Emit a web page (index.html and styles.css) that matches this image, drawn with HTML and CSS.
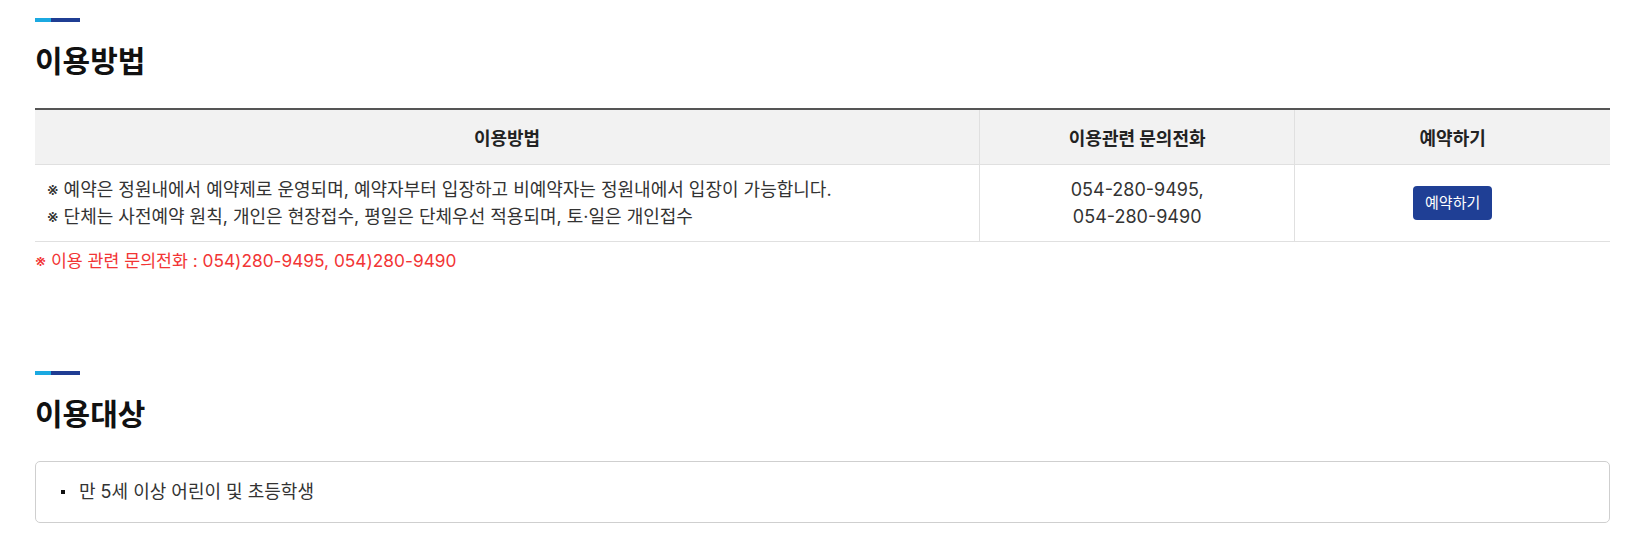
FILE: index.html
```html
<!DOCTYPE html>
<html lang="ko">
<head>
<meta charset="utf-8">
<title>이용방법</title>
<link rel="stylesheet" href="styles.css">
</head>
<body>
<div class="wrap">
  <section class="section">
    <div class="accent"><span class="accent-light"></span><span class="accent-dark"></span></div>
    <h2 class="title">이용방법</h2>
    <table class="info-table">
      <colgroup>
        <col class="col-main">
        <col class="col-side">
        <col class="col-side">
      </colgroup>
      <thead>
        <tr>
          <th>이용방법</th>
          <th>이용관련 문의전화</th>
          <th>예약하기</th>
        </tr>
      </thead>
      <tbody>
        <tr>
          <td class="cell-left">※ 예약은 정원내에서 예약제로 운영되며, 예약자부터 입장하고 비예약자는 정원내에서 입장이 가능합니다.<br>※ 단체는 사전예약 원칙, 개인은 현장접수, 평일은 단체우선 적용되며, 토·일은 개인접수</td>
          <td class="cell-phone">054-280-9495,<br>054-280-9490</td>
          <td class="cell-btn"><a class="btn" href="#">예약하기</a></td>
        </tr>
      </tbody>
    </table>
    <p class="notice">※ 이용 관련 문의전화 : 054)280-9495, 054)280-9490</p>
  </section>

  <section class="section section-second">
    <div class="accent"><span class="accent-light"></span><span class="accent-dark"></span></div>
    <h2 class="title">이용대상</h2>
    <div class="box">
      <ul class="dot-list">
        <li>만 5세 이상 어린이 및 초등학생</li>
      </ul>
    </div>
  </section>
</div>
</body>
</html>
```

FILE: styles.css
```css
* { box-sizing: border-box; }

html, body {
  margin: 0;
  padding: 0;
  background: #fff;
}

body {
  font-family: Inter, "Noto Sans CJK KR", sans-serif;
  color: #333;
  font-size: 18px;
}

.wrap {
  width: 1575px;
  margin-left: 35px;
  padding-top: 18px;
}

.accent {
  display: flex;
  height: 4px;
  width: 45px;
}
.accent-light { width: 16px; background: #1ba9e1; }
.accent-dark { width: 29px; background: #1f3d93; }

.title {
  margin: 17px 0 0;
  font-size: 30px;
  line-height: 40px;
  font-weight: 700;
  color: #111;
  font-family: "Noto Sans CJK KR", sans-serif;
}

.info-table {
  margin-top: 29px;
  width: 100%;
  border-collapse: collapse;
  border-top: 2px solid #555;
  table-layout: fixed;
}
.col-main { width: 944px; }
.col-side { width: 315px; }

.info-table th {
  height: 55px;
  background: #f2f2f2;
  font-weight: 700;
  font-size: 18px;
  color: #222;
  border-bottom: 1px solid #e0e0e0;
  border-left: 1px solid #e0e0e0;
  padding: 0;
}
.info-table th:first-child { border-left: 0; }

.info-table td {
  border-bottom: 1px solid #e0e0e0;
  border-left: 1px solid #e0e0e0;
  height: 77px;
  padding: 11px 12px;
  font-size: 18px;
  line-height: 27px;
  color: #333;
}
.info-table td:first-child { border-left: 0; }

.cell-phone { text-align: center; }
.cell-btn { text-align: center; }

.btn {
  display: inline-block;
  background: #1f3f95;
  color: #fff;
  text-decoration: none;
  font-size: 15px;
  line-height: 34px;
  height: 34px;
  padding: 0 12px;
  border-radius: 4px;
}

.notice {
  margin: 7px 0 0;
  color: #f23535;
  font-size: 17.3px;
  line-height: 24px;
}

.section-second { margin-top: 98px; }

.box {
  margin-top: 29px;
  border: 1px solid #cfcfcf;
  border-radius: 5px;
  padding: 18px 25px;
}

.dot-list {
  list-style: none;
  margin: 0;
  padding: 0;
}
.dot-list li {
  display: flex;
  align-items: center;
  gap: 14px;
  font-size: 18px;
  line-height: 24px;
  color: #333;
}
.dot-list li::before {
  content: "";
  width: 4px;
  height: 4px;
  background: #111;
  flex: none;
}
```
